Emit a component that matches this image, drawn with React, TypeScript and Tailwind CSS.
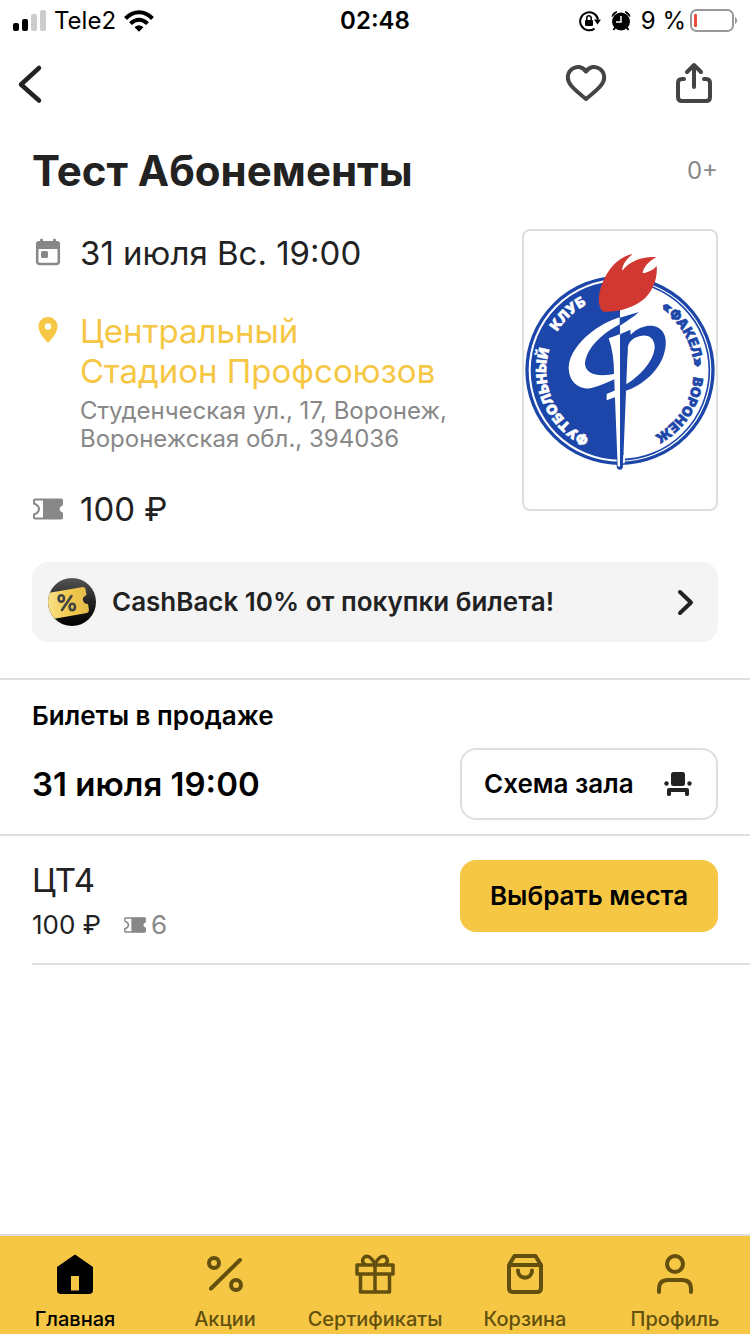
import type { ReactNode } from 'react';

function TicketIcon({ className }: { className: string }) {
  return (
    <svg viewBox="0 0 30 22" className={className} aria-hidden="true">
      <path
        d="M2 1.5H28Q29 1.5 29 2.5V6.5Q25.5 8 25.5 11T29 15.5V19.5Q29 20.5 28 20.5H2Q1 20.5 1 19.5V16.5Q6 14.5 6 11T1 5.5V2.5Q1 1.5 2 1.5Z"
        fill="#fff"
        stroke="#888"
        strokeWidth="2"
      />
      <path d="M10 1H28Q29.500 1 29.500 2.500V7Q26 8.500 26 11T29.500 15V19.500Q29.500 21 28 21H10Z" fill="#888" />
    </svg>
  );
}

function StatusBar() {
  return (
    <div className="grid h-10 grid-cols-3 items-center px-3 pt-0.5 text-2xl leading-8 text-black">
      <div className="flex items-center gap-2">
        <svg viewBox="0 0 34 22" className="h-[22px] w-[34px]" aria-hidden="true">
          <rect x="1" y="13" width="6" height="8" rx="2" />
          <rect x="10" y="9" width="6" height="12" rx="2" />
          <rect x="19" y="4" width="6" height="17" rx="2" fill="#ccc" />
          <rect x="28" y="0" width="6" height="21" rx="2" fill="#ccc" />
        </svg>
        <span>Tele2</span>
        <svg viewBox="0 0 30 22" className="h-[22px] w-[30px]" aria-hidden="true" fill="none" stroke="#000" strokeWidth="4">
          <path d="M1.500 8.500Q7.500 2.300 15 2.300T28.500 8.500" />
          <path d="M6.500 13.700Q10.500 9.700 15 9.700T23.500 13.700" />
          <path d="M15 21.800L10.500 17.200Q15 13.400 19.500 17.200Z" fill="#000" stroke="none" />
        </svg>
      </div>
      <span className="text-center font-semibold">02:48</span>
      <div className="flex items-center justify-end gap-1">
        <svg viewBox="0 0 22 22" className="h-[22px] w-[22px] shrink-0" aria-hidden="true">
          <path d="M15.500 18.600A9 9 0 1 1 19 9.500" fill="none" stroke="#000" strokeWidth="2" />
          <path d="M15 9.500H22L18.500 14.500Z" />
          <rect x="6" y="10" width="8" height="6" rx="1" />
          <path d="M7.800 10V8a2.200 2.200 0 0 1 4.400 0v2" fill="none" stroke="#000" strokeWidth="1.600" />
        </svg>
        <svg viewBox="0 0 20 20" className="ml-1.5 h-5 w-5 shrink-0" aria-hidden="true">
          <circle cx="10" cy="10.500" r="9" />
          <path d="M1 5.500Q2 1 6 .8ZM19 5.500Q18 1 14 .8Z" stroke="#000" strokeWidth="1" />
          <path d="M4.500 16L2.500 19M15.500 16L17.500 19" stroke="#000" strokeWidth="2" />
          <path d="M10 5V11H5" fill="none" stroke="#fff" strokeWidth="1.500" />
        </svg>
        <span className="ml-1.5 whitespace-nowrap">9 %</span>
        <svg viewBox="0 0 48 24" className="h-6 w-12 shrink-0" aria-hidden="true">
          <rect x="1" y="1" width="42" height="21" rx="5.500" fill="none" stroke="#999" strokeWidth="2" />
          <rect x="4" y="5" width="3" height="13" rx="1" fill="#eb4d3d" />
          <path d="M45.500 8.500Q48 11.500 45.500 14.500Z" fill="#999" stroke="#999" />
        </svg>
      </div>
    </div>
  );
}

function ClubLogo() {
  return (
    <svg viewBox="42 33 576 834" className="w-full" role="img" aria-label="Футбольный клуб «Факел» Воронеж">
      <defs>
        <path id="ringLeft" d="M330 672A221 221 0 0 1 330 230" />
        <path id="ringRight" d="M330 230A221 221 0 0 1 330 672" />
      </defs>
      <circle cx="330" cy="451" r="279" fill="#fff" stroke="#1c46a9" strokeWidth="10" />
      <path d="M330 183A268 268 0 0 0 330 719Z" fill="#1c46a9" />
      <path d="M330 183A268 268 0 0 1 330 719" fill="none" stroke="#1c46a9" strokeWidth="5" />
      <g fontWeight="900" fontFamily="Inter, sans-serif" strokeWidth="1.5">
        <g fill="#fff" stroke="#fff" fontSize="42">
          <text><textPath href="#ringLeft" startOffset="94">ФУТБОЛЬНЫЙ</textPath></text>
          <text><textPath href="#ringLeft" startOffset="468">КЛУБ</textPath></text>
        </g>
        <g fill="#1c46a9" stroke="#1c46a9" fontSize="41">
          <text><textPath href="#ringRight" startOffset="127">«ФАКЕЛ»</textPath></text>
          <text><textPath href="#ringRight" startOffset="366">ВОРОНЕЖ</textPath></text>
        </g>
      </g>
      <path
        d="M331 292C275 306 183 368 176 440C176 488 208 508 242 505C274 496 300 484 322 474V459C272 473 228 466 225 432C228 389 268 345 331 312Z"
        fill="#fff"
      />
      <path d="M290 522L325 507V528L290 541Z" fill="#fff" />
      <path d="M329 293L387 276C370 291 350 304 329 317Z" fill="#1c46a9" />
      <path
        d="M330 343L361 329L362 344C385 322 410 315 430 318C466 325 475 362 462 402C448 450 400 496 344 514V496C396 465 435 416 434 378C430 343 400 341 374 354C360 362 354 372 353 388L345 500H330Z"
        fill="#1c46a9"
      />
      <path d="M320 700H340L339 738Q339 749 330 749Q320 749 320 738Z" fill="#1c46a9" />
      <path d="M296 355L331 342V738Q327 742 323 738L312 460Q312 400 296 355Z" fill="#fff" />
      <path d="M330 342L353 388L339 740L333 742L330 735Z" fill="#1c46a9" />
      <path d="M340 705H346L344 730H339Z" fill="#fff" />
      <path
        d="M280 275C260 260 263 215 285 172C303 136 335 107 368 102C347 120 336 135 337 152C357 124 395 108 440 111C418 122 399 142 398 160C412 158 429 151 440 138C443 168 434 205 405 235C373 262 330 277 280 275Z"
        fill="#d13832"
      />
    </svg>
  );
}

function CashbackIcon() {
  return (
    <svg viewBox="0 0 48 48" className="h-12 w-12 shrink-0" aria-hidden="true">
      <defs>
        <clipPath id="coin"><circle cx="24" cy="24" r="24" /></clipPath>
        <linearGradient id="night" x1=".5" y1="0" x2=".5" y2="1">
          <stop offset="0" stopColor="#555" />
          <stop offset=".5" stopColor="#222" />
          <stop offset="1" stopColor="#000" />
        </linearGradient>
        <linearGradient id="gold" x1="0" y1="0" x2="1" y2="0">
          <stop offset="0" stopColor="#f9e28f" />
          <stop offset=".5" stopColor="#f2cb50" />
          <stop offset="1" stopColor="#e3ba48" />
        </linearGradient>
      </defs>
      <g clipPath="url(#coin)">
        <rect width="48" height="48" fill="url(#night)" />
        <path d="M0 15L35 9Q37 9 37.500 11L38.500 17Q34 19 35 22.500T40 26L41 32Q41 34 39 35L5 41L-2 40Z" fill="url(#gold)" />
      </g>
      <g fill="none" stroke="#444" strokeWidth="2.600" strokeLinecap="round">
        <ellipse cx="13.300" cy="20.500" rx="2.700" ry="3.300" />
        <ellipse cx="24.300" cy="29" rx="2.700" ry="3.300" />
        <path d="M23.500 18L14 32" />
      </g>
    </svg>
  );
}

function Tab({ label, active, children }: { label: string; active?: boolean; children: ReactNode }) {
  return (
    <a
      href="#"
      aria-current={active ? 'page' : undefined}
      className={
        active
          ? 'flex min-w-0 flex-1 flex-col items-center gap-[11px] text-black'
          : 'flex min-w-0 flex-1 flex-col items-center gap-[11px] text-[#63500f]'
      }
    >
      <svg
        viewBox="0 0 44 44"
        className="h-11 w-11"
        aria-hidden="true"
        fill="none"
        stroke="currentColor"
        strokeWidth="4"
        strokeLinecap="round"
        strokeLinejoin="round"
      >
        {children}
      </svg>
      <span className="text-xl leading-6 font-medium">{label}</span>
    </a>
  );
}

export default function App() {
  return (
    <div className="flex min-h-screen flex-col bg-white font-['Inter',sans-serif] text-[#222]">
      <StatusBar />

      <header className="flex h-[88px] items-center justify-between pr-8 pl-4">
        <button type="button" aria-label="Назад">
          <svg viewBox="0 0 28 40" className="h-10 w-7" fill="none" stroke="#222" strokeWidth="4.500" strokeLinecap="round" strokeLinejoin="round">
            <path d="M23 4L5 20.500L23 36.500" />
          </svg>
        </button>
        <div className="flex items-center gap-[62px]">
          <button type="button" aria-label="В избранное">
            <svg viewBox="0 0 44 44" className="h-11 w-11" fill="none" stroke="#444" strokeWidth="4" strokeLinejoin="round">
              <path d="M22 9.500C18.500 4.500 12.500 3.500 8 7C2.500 11.500 2.500 18.500 7.500 24C11 28 17 33 22 37C27 33 33 28 36.500 24C41.500 18.500 41.500 11.500 36 7C31.500 3.500 25.500 4.500 22 9.500Z" />
            </svg>
          </button>
          <button type="button" aria-label="Поделиться">
            <svg viewBox="0 0 48 48" className="h-12 w-12" fill="none" stroke="#444" strokeWidth="4" strokeLinecap="round" strokeLinejoin="round">
              <path d="M14 19H12Q8 19 8 23V37Q8 41 12 41H36Q40 41 40 37V23Q40 19 36 19H34M24 27V6M17 12L24 5L31 12" />
            </svg>
          </button>
        </div>
      </header>

      <main>
        <div className="flex h-[86px] items-center justify-between px-8">
          <h1 className="text-[42px] leading-[48px] font-bold">Тест Абонементы</h1>
          <span className="text-2xl text-[#888]">0+</span>
        </div>

        <section className="mt-[15px] flex items-start justify-between gap-6 px-8">
          <div className="flex flex-col gap-[34px]">
            <div className="flex items-center gap-4">
              <svg viewBox="0 0 32 32" className="h-8 w-8" aria-hidden="true">
                <rect x="5.200" y="5.500" width="21.600" height="21.600" rx="2.500" fill="none" stroke="#888" strokeWidth="2.500" />
                <path d="M4 12V7Q4 4 7 4H25Q28 4 28 7V12Z" fill="#888" />
                <path d="M9.500 5V3M22.500 5V3" stroke="#888" strokeWidth="3" strokeLinecap="round" />
                <rect x="9" y="14" width="7" height="7" rx="1.500" fill="#888" />
              </svg>
              <span className="text-[33px] leading-[48px]">31 июля Вс. 19:00</span>
            </div>
            <div className="flex items-start gap-4">
              <svg viewBox="0 0 32 40" className="h-10 w-8 shrink-0" aria-hidden="true">
                <path d="M16 6C10.500 6 6.500 10 6.500 15.500C6.500 22 13 28.500 16 32C19 28.500 25.500 22 25.500 15.500C25.500 10 21.500 6 16 6Z" fill="#f5c744" />
                <circle cx="16" cy="15.500" r="3.200" fill="#fff" />
              </svg>
              <div>
                <a href="#" className="block text-[33px] leading-10 text-[#f5c744]">
                  Центральный
                  <br />
                  Стадион Профсоюзов
                </a>
                <p className="mt-1.5 text-2xl leading-7 text-[#888]">
                  Студенческая ул., 17, Воронеж,
                  <br />
                  Воронежская обл., 394036
                </p>
              </div>
            </div>
            <div className="flex items-center gap-4">
              <div className="flex w-8 justify-center">
                <TicketIcon className="h-[22px] w-[30px]" />
              </div>
              <span className="text-[33px] leading-[44px]">100 ₽</span>
            </div>
          </div>
          <div className="w-[196px] shrink-0 rounded-lg border-2 border-[#dfdfdf]">
            <ClubLogo />
          </div>
        </section>

        <section className="px-8 pt-[31px] pb-9">
          <a href="#" className="flex h-20 items-center gap-4 rounded-2xl bg-[#f4f4f4] px-4">
            <CashbackIcon />
            <span className="flex-1 text-[26px] leading-8 font-semibold">CashBack 10% от покупки билета!</span>
            <svg viewBox="0 0 32 32" className="h-8 w-8" aria-hidden="true" fill="none" stroke="#222" strokeWidth="4" strokeLinecap="round" strokeLinejoin="round">
              <path d="M10 6L21 16.500L10 27" />
            </svg>
          </a>
        </section>

        <section className="border-y-2 border-[#dfdfdf] px-8 pt-5 pb-3.5 text-black">
          <h2 className="text-[26px] leading-8 font-semibold">Билеты в продаже</h2>
          <div className="mt-4 flex items-center justify-between">
            <span className="text-[33px] leading-10 font-semibold">31 июля 19:00</span>
            <button type="button" className="flex h-[72px] w-[258px] items-center justify-between rounded-2xl border-2 border-[#dfdfdf] px-[22px] text-[26px] leading-8 font-semibold">
              Схема зала
              <svg viewBox="0 0 32 32" className="h-8 w-8" aria-hidden="true" fill="#222">
                <rect x="9" y="4" width="14" height="14" rx="2.500" />
                <circle cx="4.500" cy="15.500" r="2.200" />
                <circle cx="27.500" cy="15.500" r="2.200" />
                <path d="M5 28V22Q5 20 7 20H25Q27 20 27 22V26.500Q27 28 25 28T23 26.500V24H9V26.500Q9 28 7 28T5 26.500Z" />
              </svg>
            </button>
          </div>
        </section>

        <section className="ml-8 flex items-start justify-between border-b-2 border-[#dfdfdf] pt-6 pr-8 pb-[23px]">
          <div>
            <h3 className="text-[33px] leading-10">ЦТ4</h3>
            <div className="mt-2.5 flex items-center text-[26px] leading-[30px]">
              <span>100 ₽</span>
              <TicketIcon className="ml-[22px] h-4 w-6" />
              <span className="ml-1 text-[#888]">6</span>
            </div>
          </div>
          <button type="button" className="h-[72px] w-[258px] rounded-2xl bg-[#f5c744] text-[26px] leading-8 font-semibold text-black">
            Выбрать места
          </button>
        </section>
      </main>

      <nav className="mt-auto flex h-[100px] border-t-2 border-[#dfdfdf] bg-[#f5c744] pt-4">
        <Tab label="Главная" active>
          <path d="M22 2.500L40 15V38Q40 42 36 42H8Q4 42 4 38V15Z" fill="currentColor" stroke="none" />
          <path d="M18 24H26V38.500H18Z" fill="#f5c744" stroke="none" />
        </Tab>
        <Tab label="Акции">
          <circle cx="11" cy="11" r="5" />
          <circle cx="33" cy="33" r="5" />
          <path d="M37 8L8 36.500" />
        </Tab>
        <Tab label="Сертификаты">
          <path d="M4 13H40V22H4ZM7.500 22V40H36.500V22M22 13V40M22 12C19 6 15 2.500 11.500 5C8 8 10 12 13 13M22 12C25 6 29 2.500 32.500 5C36 8 34 12 31 13" strokeWidth="3.500" />
        </Tab>
        <Tab label="Корзина">
          <path d="M6 13L11.500 4H32.500L38 13M6 13H38V36Q38 40 34 40H10Q6 40 6 36Z" />
          <path d="M15 18.500C15 28 29 28 29 18.500" />
        </Tab>
        <Tab label="Профиль">
          <circle cx="22" cy="12" r="8" />
          <path d="M6 40V37Q6 28 15 28H29Q38 28 38 37V40" />
        </Tab>
      </nav>
    </div>
  );
}
